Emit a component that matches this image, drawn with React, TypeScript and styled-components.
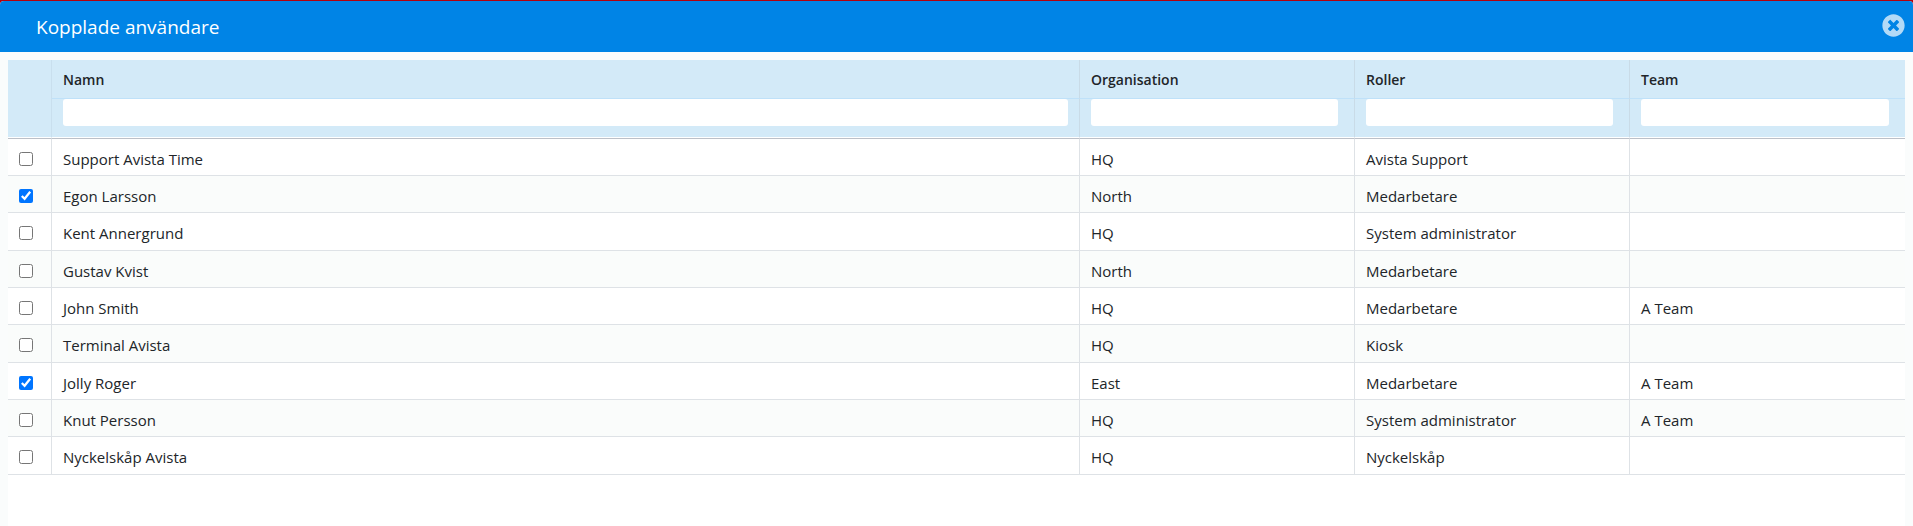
import React, { useState } from "react";
import styled, { createGlobalStyle } from "styled-components";
import { FaTimesCircle } from "react-icons/fa";

const GlobalStyle = createGlobalStyle`
  *, *::before, *::after { box-sizing: border-box; }
  html, body, #root { height: 100%; }
  body {
    margin: 0;
    background: #b3000c;
    color: #212529;
    font-family: "Segoe UI", "Open Sans", sans-serif;
    font-size: 15px;
    line-height: 20px;
  }
`;

const Page = styled.div`
  min-height: 100%;
  display: flex;
  flex-direction: column;
  padding-top: 1px;
`;

const Dialog = styled.section`
  flex: 1;
  display: flex;
  flex-direction: column;
  overflow: hidden;
  border-radius: 4px 4px 0 0;
  background: #fafcfc;
`;

const TitleBar = styled.header`
  display: flex;
  align-items: center;
  justify-content: space-between;
  height: 51px;
  padding: 0 8px 0 36px;
  background: #0084e6;
  color: #fff;
`;

const Title = styled.h1`
  margin: 0;
  font-size: 19px;
  line-height: 28px;
  font-weight: 400;
`;

const CloseButton = styled.button`
  display: flex;
  padding: 0 0 2px;
  border: 0;
  background: none;
  color: #b3daf7;
  cursor: pointer;
`;

const Content = styled.main`
  flex: 1;
  margin: 8px 8px 0;
  background: #fff;
`;

const Table = styled.table`
  width: 100%;
  table-layout: fixed;
  border-collapse: separate;
  border-spacing: 0;
`;

const Column = styled.col<{ $width?: string }>`
  width: ${({ $width }) => $width ?? "auto"};
`;

const SelectHead = styled.td`
  padding: 0;
  background: #d3eaf8;
  border-right: 1px solid #c9dfee;
  border-bottom: 1px solid #fff;
`;

const HeadCell = styled.th`
  height: 39px;
  padding: 1px 11px 0;
  background: #d3eaf8;
  border-right: 1px solid #c9dbe7;
  border-bottom: 1px solid #bfe1f9;
  font-size: 14px;
  font-weight: 600;
  text-align: left;

  &:last-child { border-right: 0; }
`;

const FilterCell = styled.td<{ $wide?: boolean }>`
  height: 39px;
  padding: 0 ${({ $wide }) => ($wide ? 11 : 16)}px 0 11px;
  background: #d3eaf8;
  border-right: 1px solid #c9dbe7;
  border-bottom: 1px solid #fff;
  vertical-align: top;

  &:last-child { border-right: 0; }
`;

const FilterInput = styled.input`
  display: block;
  width: 100%;
  height: 27px;
  padding: 0 8px;
  border: 0;
  border-radius: 3px;
  background: #fff;
  font: inherit;
`;

const Row = styled.tr`
  background: #fff;

  &:nth-child(even) { background: #fafcfb; }
`;

const Cell = styled.td`
  height: 37px;
  padding: 3px 11px 0;
  border-right: 1px solid #dee2e6;
  border-bottom: 1px solid #dee2e6;
  white-space: nowrap;

  &:last-child { border-right: 0; }
  ${Row}:nth-child(3n) > & { height: 38px; }
  ${Row}:first-child > & { height: 38px; border-top: 1px solid #bcc0c8; }
`;

const Checkbox = styled.input`
  display: block;
  width: 14px;
  height: 14px;
  margin: 0;
  accent-color: #0075ff;
`;

const columns = [
  { key: "name", label: "Namn" },
  { key: "organisation", label: "Organisation" },
  { key: "role", label: "Roller" },
  { key: "team", label: "Team" },
] as const;

type User = Record<(typeof columns)[number]["key"], string>;

const users: User[] = [
  { name: "Support Avista Time", organisation: "HQ", role: "Avista Support", team: "" },
  { name: "Egon Larsson", organisation: "North", role: "Medarbetare", team: "" },
  { name: "Kent Annergrund", organisation: "HQ", role: "System administrator", team: "" },
  { name: "Gustav Kvist", organisation: "North", role: "Medarbetare", team: "" },
  { name: "John Smith", organisation: "HQ", role: "Medarbetare", team: "A Team" },
  { name: "Terminal Avista", organisation: "HQ", role: "Kiosk", team: "" },
  { name: "Jolly Roger", organisation: "East", role: "Medarbetare", team: "A Team" },
  { name: "Knut Persson", organisation: "HQ", role: "System administrator", team: "A Team" },
  { name: "Nyckelskåp Avista", organisation: "HQ", role: "Nyckelskåp", team: "" },
];

export default function App() {
  const [selected, setSelected] = useState<string[]>(["Egon Larsson", "Jolly Roger"]);
  const [filters, setFilters] = useState<User>({ name: "", organisation: "", role: "", team: "" });

  const toggle = (name: string) =>
    setSelected((now) => (now.includes(name) ? now.filter((n) => n !== name) : [...now, name]));

  const visible = users.filter((user) =>
    columns.every(({ key }) => user[key].toLowerCase().includes(filters[key].toLowerCase()))
  );

  return (
    <>
      <GlobalStyle />
      <Page>
        <Dialog aria-labelledby="dialog-title">
          <TitleBar>
            <Title id="dialog-title">Kopplade användare</Title>
            <CloseButton type="button" aria-label="Stäng">
              <FaTimesCircle size={23} />
            </CloseButton>
          </TitleBar>
          <Content>
            <Table>
              <colgroup>
                <Column $width="44px" />
                <Column />
                <Column $width="275px" />
                <Column $width="275px" />
                <Column $width="275px" />
              </colgroup>
              <thead>
                <tr>
                  <SelectHead rowSpan={2} />
                  {columns.map(({ key, label }) => (
                    <HeadCell key={key} scope="col">{label}</HeadCell>
                  ))}
                </tr>
                <tr>
                  {columns.map(({ key, label }) => (
                    <FilterCell key={key} $wide={key === "name"}>
                      <FilterInput
                        type="text"
                        aria-label={label}
                        value={filters[key]}
                        onChange={(e) => setFilters({ ...filters, [key]: e.target.value })}
                      />
                    </FilterCell>
                  ))}
                </tr>
              </thead>
              <tbody>
                {visible.map((user) => (
                  <Row key={user.name}>
                    <Cell>
                      <Checkbox
                        type="checkbox"
                        aria-label={user.name}
                        checked={selected.includes(user.name)}
                        onChange={() => toggle(user.name)}
                      />
                    </Cell>
                    {columns.map(({ key }) => (
                      <Cell key={key}>{user[key]}</Cell>
                    ))}
                  </Row>
                ))}
              </tbody>
            </Table>
          </Content>
        </Dialog>
      </Page>
    </>
  );
}
